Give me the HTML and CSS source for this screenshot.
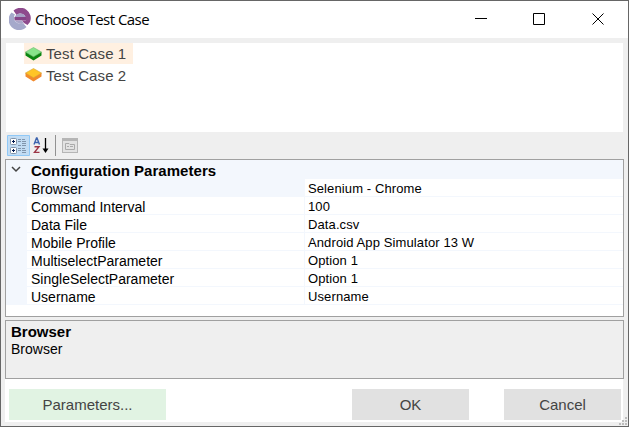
FILE: index.html
```html
<!DOCTYPE html>
<html lang="en">
<head>
<meta charset="utf-8">
<title>Choose Test Case</title>
<link rel="stylesheet" href="styles.css">
</head>
<body>
<div class="window">
  <header class="titlebar">
    <svg class="logo" width="22" height="22" viewBox="0 0 22 22">
      <path d="M2.500 4.500A10.300 10.300 0 1 0 17.500 19L14.500 15.500Q9 17 6 13Q4 9 6 6.500Z" fill="#a5a9cb"/>
      <path d="M4.500 2.500A10.300 10.300 0 0 1 21 14L18.500 17L15 15L13 12.500H17Q17 5.500 11 5.500Q9 5.500 7.500 7Z" fill="#8e4a8d"/>
      <path d="M5.500 9.500Q7 5.500 11 5.500Q16 5.500 16.500 9.500Z" fill="#a5a0c5"/>
      <path d="M5.500 9H17V12.500H6Q5 11 5.500 9Z" fill="#854488"/>
      <path d="M6 12.500H13L15 15.500Q9 17 6 12.500Z" fill="#a9a5c8"/>
    </svg>
    <h1 class="title">Choose Test Case</h1>
    <svg class="controls" width="132" height="14" viewBox="0 0 132 14" fill="none" stroke="#000">
      <path d="M0 6.5H12M58.5 1.5H69.5V12.5H58.5ZM117.5 1.5L128.5 12.5M128.5 1.5L117.5 12.5"/>
    </svg>
  </header>
  <ul class="tree">
    <li class="node selected">
      <svg class="cube" width="17" height="14" viewBox="0 0 17 14"><path d="M.5 5V8.5L8.5 13.5L16.5 8.5V5Z" fill="#0a8510"/><path d="M.5 5L8.5.5L16.5 5L8.5 9.8Z" fill="#87e48a" stroke="#6fb870" stroke-width=".6"/></svg>
      <span class="node-text">Test Case 1</span>
    </li>
    <li class="node">
      <svg class="cube" width="17" height="14" viewBox="0 0 17 14"><path d="M.5 5V8.5L8.5 13.5L16.5 8.5V5Z" fill="#f28a2c"/><path d="M.5 5L8.5.5L16.5 5L8.5 9.8Z" fill="#ffc526" stroke="#d9a437" stroke-width=".6"/></svg>
      <span class="node-text">Test Case 2</span>
    </li>
  </ul>
  <div class="toolbar">
    <svg width="75" height="22" viewBox="0 0 75 22">
      <path d="M.5.5H22.5V20.5H.5Z" fill="#c2dcf3" stroke="#90c8f6"/>
      <g fill="#fff" stroke="#8093a8"><rect x="3.5" y="3.5" width="6" height="6" rx="1"/><rect x="3.5" y="12.5" width="6" height="6" rx="1"/></g>
      <path d="M5 6.500H8M6.500 5V8M5 15.500H8M6.500 14V17" stroke="#001a50"/>
      <path d="M11 4.500H14M15 4.500H18M11 6.500H14M15 6.500H19M15 8.500H19M11 10.500H14M15 10.500H19M11 13.500H14M15 13.500H18M11 15.500H14M15 15.500H19M15 17.500H19" stroke="#8095ac"/>
      <path d="M27 9.500L29.500 3H30L32.500 9.500M28 7.500H31.500" fill="none" stroke="#3c63ae" stroke-width="1.4"/>
      <path d="M27.500 11.700H32L27.500 17.400H32.500" fill="none" stroke="#9c3545" stroke-width="1.4"/>
      <path d="M38.500 3V16" stroke="#000" stroke-width="1.3"/><path d="M35.500 13.500H41.500L38.500 18Z"/>
      <path d="M48.500 0V21" stroke="#929292"/>
      <rect x="55.500" y="3.500" width="15" height="14" fill="#e2e2e2" stroke="#b5b5b5"/>
      <path d="M56 5H70" stroke="#b5b5b5" stroke-width="2"/>
      <path d="M58.500 8.500H62L63 9.500H67.500V14.500H58.500ZM60 11.500H62M63 11.500H66" fill="none" stroke="#aaa"/>
    </svg>
  </div>
  <section class="grid">
    <div class="gutter"><svg width="10" height="7" viewBox="0 0 10 7"><path d="M1 1L5 5L9 1" fill="none" stroke="#444" stroke-width="1.5"/></svg></div>
    <div class="rows">
      <div class="group">Configuration Parameters</div>
      <div class="row current"><span class="name">Browser</span><span class="value">Selenium - Chrome</span></div>
      <div class="row"><span class="name">Command Interval</span><span class="value">100</span></div>
      <div class="row"><span class="name">Data File</span><span class="value">Data.csv</span></div>
      <div class="row"><span class="name">Mobile Profile</span><span class="value">Android App Simulator 13 W</span></div>
      <div class="row"><span class="name">MultiselectParameter</span><span class="value">Option 1</span></div>
      <div class="row"><span class="name">SingleSelectParameter</span><span class="value">Option 1</span></div>
      <div class="row"><span class="name">Username</span><span class="value">Username</span></div>
    </div>
  </section>
  <section class="help">
    <strong class="help-title">Browser</strong>
    <span class="help-text">Browser</span>
  </section>
  <footer class="footer">
    <button class="btn params">Parameters...</button>
    <button class="btn ok">OK</button>
    <button class="btn cancel">Cancel</button>
  </footer>
  <svg class="grip" width="9" height="9" viewBox="0 0 9 9" fill="#bdbdbd"><path d="M6 0H8V2H6ZM3 3H5V5H3ZM6 3H8V5H6ZM0 6H2V8H0ZM3 6H5V8H3ZM6 6H8V8H6Z"/></svg>
</div>
</body>
</html>
```

FILE: styles.css
```css
* { box-sizing: border-box; }
body { margin: 0; overflow: hidden; }
.window {
  position: relative;
  width: 629px;
  height: 427px;
  padding: 0 4px 0 4px;
  border: 1px solid #666;
  background: #efefef;
  font-family: "Liberation Sans", sans-serif;
  font-size: 13px;
  color: #000;
  display: flex;
  flex-direction: column;
}
.titlebar {
  height: 37px;
  flex: none;
  margin: 0 -4px;
  padding-left: 8px;
  background: #fff;
  display: flex;
  align-items: center;
}
.logo { margin-top: -2px; }
.title {
  margin: -2px 0 0 4px;
  font: 400 15px/20px "Open Sans", sans-serif;
  letter-spacing: -0.53px;
}
.controls { margin: -2px 21px 0 auto; }
.tree {
  height: 89px;
  flex: none;
  margin: 5px 1px 0 1px;
  padding: 0 0 0 18px;
  background: #fff;
  list-style: none;
}
.node {
  width: 109px;
  height: 22px;
  display: flex;
  align-items: center;
  font-size: 15px;
  color: #444;
}
.node.selected { background: #fff0e1; height: 21px; }
.cube { margin-left: 0.5px; }
.node-text { margin-left: 4.5px; letter-spacing: 0.1px; white-space: nowrap; }
.toolbar { height: 27px; flex: none; padding: 3px 0 0 2px; }
.toolbar svg { display: block; }
.grid {
  height: 158px;
  flex: none;
  border: 1px solid #a0a0a0;
  background: #fff;
  display: flex;
}
.gutter { width: 21px; height: 145px; padding: 6px 0 0 5px; background: #f3f7fd; }
.gutter svg { display: block; }
.rows { flex: 1; }
.group { height: 19px; padding-left: 4px; background: #f3f7fd; line-height: 22px; font-weight: 700; font-size: 15px; letter-spacing: 0.04px; }
.row { height: 18px; display: flex; }
.name { width: 278px; padding-left: 4px; border-bottom: 1px solid #f3f7fd; border-right: 1px solid #f3f7fd; font-size: 14px; line-height: 21px; }
.value { flex: 1; padding-left: 3px; border-bottom: 1px solid #f3f7fd; line-height: 19px; letter-spacing: 0.11px; }
.current .name { background: #f3f7fd; }
.help {
  height: 59px;
  flex: none;
  margin-top: 3px;
  padding: 3px 5px;
  border: 1px solid #a0a0a0;
  display: flex;
  flex-direction: column;
  line-height: 17px;
}
.help-title { font-size: 15px; line-height: 16px; }
.help-text { font-size: 14px; line-height: 19px; }
.footer {
  height: 43px;
  flex: none;
  margin-right: 1px;
  padding: 10px 2px 0 4px;
  background: #fff;
  display: flex;
}
.btn {
  height: 31px;
  padding: 0;
  border: 0;
  background: #e1e1e1;
  color: #444;
  font: 15px "Liberation Sans", sans-serif;
}
.params { width: 157px; background: #e1f3e3; }
.ok { width: 117px; margin-left: auto; }
.cancel { width: 117px; margin-left: 35px; }
.grip { position: absolute; right: 0; bottom: 0; }
```
